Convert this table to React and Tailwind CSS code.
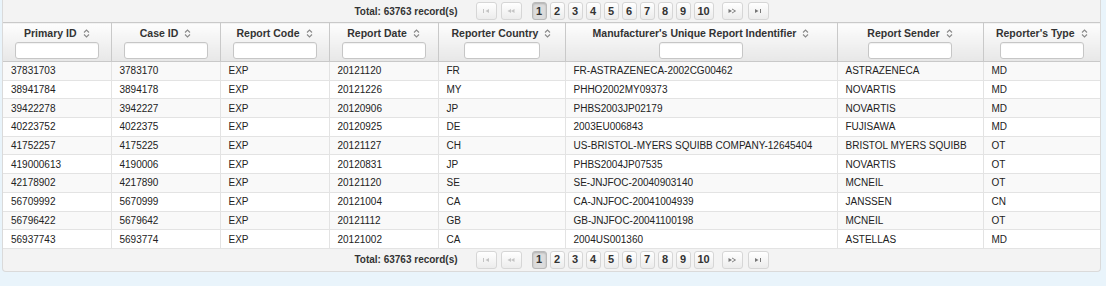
import React from "react";

const columns = [
  { label: "Primary ID", width: 108, input: 84 },
  { label: "Case ID", width: 109, input: 84 },
  { label: "Report Code", width: 109, input: 84 },
  { label: "Report Date", width: 109, input: 84 },
  { label: "Reporter Country", width: 127, input: 76 },
  { label: "Manufacturer's Unique Report Indentifier", width: 272, input: 84 },
  { label: "Report Sender", width: 146, input: 84 },
  { label: "Reporter's Type", width: 117, input: 84 },
];

const rows = [
  ["37831703", "3783170", "EXP", "20121120", "FR", "FR-ASTRAZENECA-2002CG00462", "ASTRAZENECA", "MD"],
  ["38941784", "3894178", "EXP", "20121226", "MY", "PHHO2002MY09373", "NOVARTIS", "MD"],
  ["39422278", "3942227", "EXP", "20120906", "JP", "PHBS2003JP02179", "NOVARTIS", "MD"],
  ["40223752", "4022375", "EXP", "20120925", "DE", "2003EU006843", "FUJISAWA", "MD"],
  ["41752257", "4175225", "EXP", "20121127", "CH", "US-BRISTOL-MYERS SQUIBB COMPANY-12645404", "BRISTOL MYERS SQUIBB", "OT"],
  ["419000613", "4190006", "EXP", "20120831", "JP", "PHBS2004JP07535", "NOVARTIS", "OT"],
  ["42178902", "4217890", "EXP", "20121120", "SE", "SE-JNJFOC-20040903140", "MCNEIL", "OT"],
  ["56709992", "5670999", "EXP", "20121004", "CA", "CA-JNJFOC-20041004939", "JANSSEN", "CN"],
  ["56796422", "5679642", "EXP", "20121112", "GB", "GB-JNJFOC-20041100198", "MCNEIL", "OT"],
  ["56937743", "5693774", "EXP", "20121002", "CA", "2004US001360", "ASTELLAS", "MD"],
];

function SortIcon() {
  return (
    <svg width="7" height="9" viewBox="0 0 7 9" className="ml-[6px] inline-block align-[-1px]">
      <path d="M1 3.5 L3.5 1 L6 3.5" fill="none" stroke="#8a8a8a" strokeWidth="1.1" />
      <path d="M1 5.5 L3.5 8 L6 5.5" fill="none" stroke="#8a8a8a" strokeWidth="1.1" />
    </svg>
  );
}

function NavIcon({ kind, disabled }) {
  const c = disabled ? "#c4c4c4" : "#777";
  return (
    <svg width="8" height="6" viewBox="0 0 8 6">
      {kind === "first" && (
        <>
          <rect x="1" y="1" width="1" height="4" fill={c} />
          <path d="M7 1 L3.5 3 L7 5 Z" fill={c} />
        </>
      )}
      {kind === "prev" && (
        <>
          <path d="M4 1 L0.5 3 L4 5 Z" fill={c} />
          <path d="M7.5 1 L4 3 L7.5 5 Z" fill={c} />
        </>
      )}
      {kind === "next" && (
        <>
          <path d="M0.5 1 L4 3 L0.5 5 Z" fill={c} />
          <path d="M4 1 L7.5 3 L4 5" fill="none" stroke={c} strokeWidth="0.9" />
        </>
      )}
      {kind === "last" && (
        <>
          <path d="M1 1 L4.5 3 L1 5 Z" fill={c} />
          <rect x="6" y="1" width="1" height="4" fill={c} />
        </>
      )}
    </svg>
  );
}

function PageButton({ children, active, wide, nav }) {
  return (
    <span
      className={
        "flex h-[18px] items-center justify-center rounded-[3px] border text-[11px] font-bold leading-none " +
        (nav ? "w-[21px] " : wide ? "w-[20px] " : "w-[15px] ") +
        (active
          ? "border-[#b9b9b9] bg-[#dcdcdc] text-[#333] shadow-[inset_0_1px_2px_rgba(0,0,0,0.2)]"
          : "border-[#d6d6d6] bg-gradient-to-b from-white to-[#ececec] text-[#333]")
      }
    >
      {children}
    </span>
  );
}

function Pager() {
  return (
    <div className="flex items-center justify-center pl-[20px]">
      <span className="mr-[18px] text-[10px] font-bold text-[#333]">Total: 63763 record(s)</span>
      <div className="flex items-center gap-[4px]">
        <PageButton nav><NavIcon kind="first" disabled /></PageButton>
        <PageButton nav><NavIcon kind="prev" disabled /></PageButton>
      </div>
      <div className="ml-[10px] flex items-center gap-[3px]">
        {[1, 2, 3, 4, 5, 6, 7, 8, 9, 10].map((n) => (
          <PageButton key={n} active={n === 1} wide={n === 10}>
            {n}
          </PageButton>
        ))}
      </div>
      <div className="ml-[8px] flex items-center gap-[5px]">
        <PageButton nav><NavIcon kind="next" /></PageButton>
        <PageButton nav><NavIcon kind="last" /></PageButton>
      </div>
    </div>
  );
}

export default function App() {
  return (
    <div
      className="h-[286px] w-[1106px] bg-[#e9f4fb] px-[2px]"
      style={{ fontFamily: '"Liberation Sans", Arial, sans-serif' }}
    >
      <div className="w-[1099px] overflow-hidden rounded-b-[4px] border border-t-0 border-[#dadada] bg-[#f3f3f3]">
        <div className="flex h-[22px] items-center justify-center">
          <Pager />
        </div>
        <table className="w-full table-fixed border-collapse">
          <colgroup>
            {columns.map((c) => (
              <col key={c.label} style={{ width: c.width }} />
            ))}
          </colgroup>
          <thead>
            <tr>
              {columns.map((c, i) => (
                <th
                  key={c.label}
                  className={
                    "h-[38px] border-y border-[#c9c9c9] bg-gradient-to-b from-[#fdfdfd] to-[#e7e7e7] px-0 pt-[4px] pb-[2px] align-top " +
                    (i < columns.length - 1 ? "border-r" : "")
                  }
                >
                  <div className="h-[13px] text-[10.5px] font-bold leading-[13px] whitespace-nowrap text-[#333]">
                    {c.label}
                    <SortIcon />
                  </div>
                  <div
                    className="mx-auto mt-[2px] h-[17px] rounded-[3px] border border-[#c6c6c6] bg-white shadow-[inset_0_1px_1px_rgba(0,0,0,0.06)]"
                    style={{ width: c.input }}
                  />
                </th>
              ))}
            </tr>
          </thead>
          <tbody>
            {rows.map((r, ri) => (
              <tr key={ri} className={ri % 2 === 0 ? "bg-[#f9f9f9]" : "bg-white"}>
                {r.map((v, ci) => (
                  <td
                    key={ci}
                    className={
                      "h-[18.7px] border-b border-[#e3e3e3] px-[8px] py-0 text-[10px] leading-[17px] whitespace-nowrap text-[#222] " +
                      (ci < r.length - 1 ? "border-r" : "")
                    }
                  >
                    {v}
                  </td>
                ))}
              </tr>
            ))}
          </tbody>
        </table>
        <div className="flex h-[22px] items-center justify-center">
          <Pager />
        </div>
      </div>
    </div>
  );
}
